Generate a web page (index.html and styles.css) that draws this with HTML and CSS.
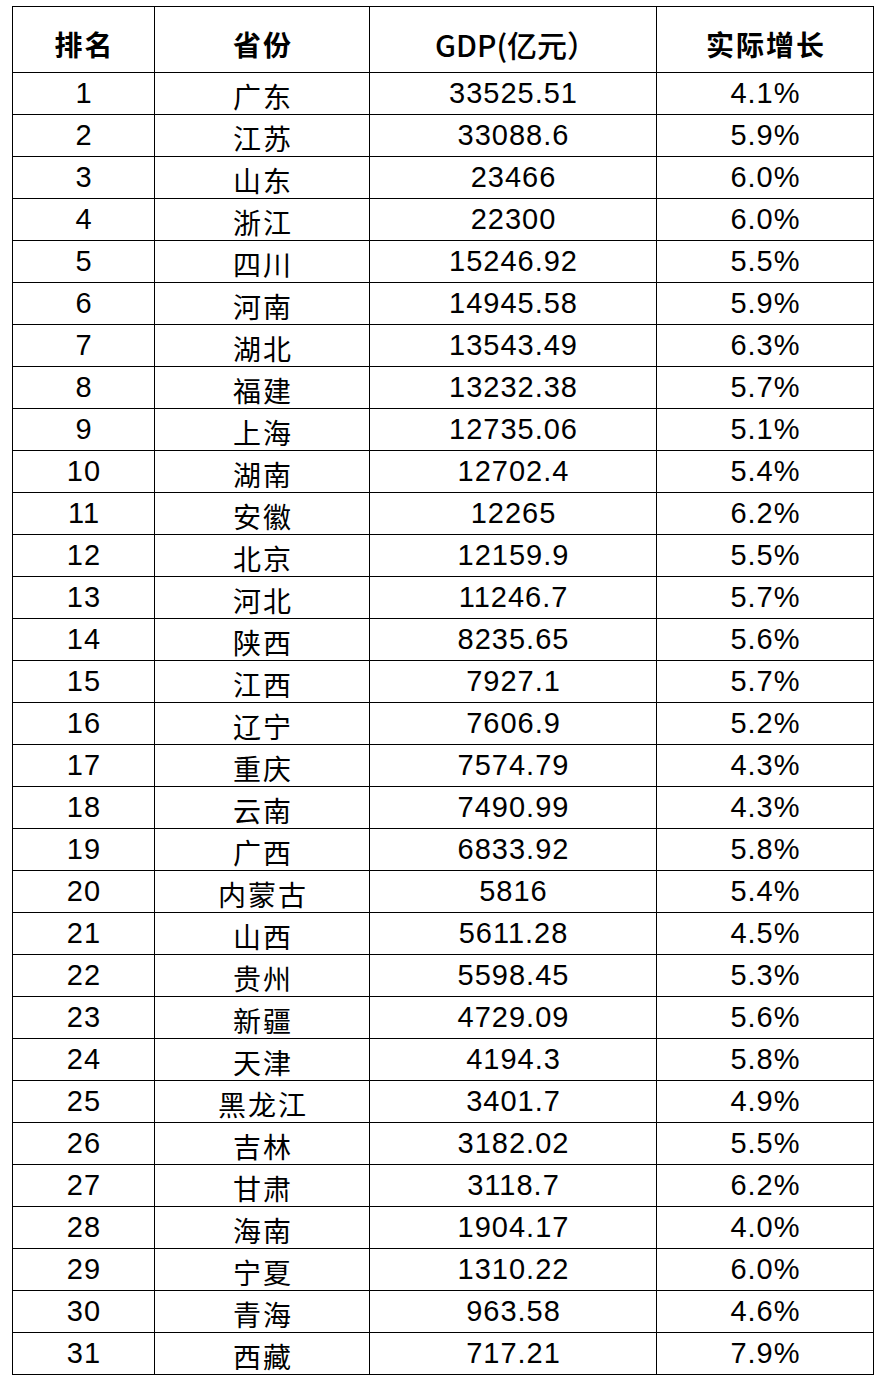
FILE: index.html
```html
<!DOCTYPE html>
<html lang="zh-CN">
<head>
<meta charset="utf-8">
<title>GDP排名</title>
<link rel="stylesheet" href="styles.css">
</head>
<body>
<table class="gdp">
<colgroup><col class="c1"><col class="c2"><col class="c3"><col class="c4"></colgroup>
<thead>
<tr><th>排名</th><th>省份</th><th class="lat">GDP(亿元）</th><th>实际增长</th></tr>
</thead>
<tbody>
<tr><td>1</td><td class="zh">广东</td><td>33525.51</td><td>4.1%</td></tr>
<tr><td>2</td><td class="zh">江苏</td><td>33088.6</td><td>5.9%</td></tr>
<tr><td>3</td><td class="zh">山东</td><td>23466</td><td>6.0%</td></tr>
<tr><td>4</td><td class="zh">浙江</td><td>22300</td><td>6.0%</td></tr>
<tr><td>5</td><td class="zh">四川</td><td>15246.92</td><td>5.5%</td></tr>
<tr><td>6</td><td class="zh">河南</td><td>14945.58</td><td>5.9%</td></tr>
<tr><td>7</td><td class="zh">湖北</td><td>13543.49</td><td>6.3%</td></tr>
<tr><td>8</td><td class="zh">福建</td><td>13232.38</td><td>5.7%</td></tr>
<tr><td>9</td><td class="zh">上海</td><td>12735.06</td><td>5.1%</td></tr>
<tr><td>10</td><td class="zh">湖南</td><td>12702.4</td><td>5.4%</td></tr>
<tr><td>11</td><td class="zh">安徽</td><td>12265</td><td>6.2%</td></tr>
<tr><td>12</td><td class="zh">北京</td><td>12159.9</td><td>5.5%</td></tr>
<tr><td>13</td><td class="zh">河北</td><td>11246.7</td><td>5.7%</td></tr>
<tr><td>14</td><td class="zh">陕西</td><td>8235.65</td><td>5.6%</td></tr>
<tr><td>15</td><td class="zh">江西</td><td>7927.1</td><td>5.7%</td></tr>
<tr><td>16</td><td class="zh">辽宁</td><td>7606.9</td><td>5.2%</td></tr>
<tr><td>17</td><td class="zh">重庆</td><td>7574.79</td><td>4.3%</td></tr>
<tr><td>18</td><td class="zh">云南</td><td>7490.99</td><td>4.3%</td></tr>
<tr><td>19</td><td class="zh">广西</td><td>6833.92</td><td>5.8%</td></tr>
<tr><td>20</td><td class="zh">内蒙古</td><td>5816</td><td>5.4%</td></tr>
<tr><td>21</td><td class="zh">山西</td><td>5611.28</td><td>4.5%</td></tr>
<tr><td>22</td><td class="zh">贵州</td><td>5598.45</td><td>5.3%</td></tr>
<tr><td>23</td><td class="zh">新疆</td><td>4729.09</td><td>5.6%</td></tr>
<tr><td>24</td><td class="zh">天津</td><td>4194.3</td><td>5.8%</td></tr>
<tr><td>25</td><td class="zh">黑龙江</td><td>3401.7</td><td>4.9%</td></tr>
<tr><td>26</td><td class="zh">吉林</td><td>3182.02</td><td>5.5%</td></tr>
<tr><td>27</td><td class="zh">甘肃</td><td>3118.7</td><td>6.2%</td></tr>
<tr><td>28</td><td class="zh">海南</td><td>1904.17</td><td>4.0%</td></tr>
<tr><td>29</td><td class="zh">宁夏</td><td>1310.22</td><td>6.0%</td></tr>
<tr><td>30</td><td class="zh">青海</td><td>963.58</td><td>4.6%</td></tr>
<tr><td>31</td><td class="zh">西藏</td><td>717.21</td><td>7.9%</td></tr>
</tbody>
</table>
</body>
</html>
```
FILE: styles.css
```css
html, body {
  margin: 0;
  padding: 0;
  background: #fff;
}
body {
  padding: 6px 0 0 12px;
  color: #000;
  font-family: "Liberation Sans", "Noto Sans CJK SC", sans-serif;
}
.gdp {
  border-collapse: collapse;
  table-layout: fixed;
  width: 861px;
}
.c1 { width: 142px; }
.c2 { width: 215px; }
.c3 { width: 287px; }
.c4 { width: 217px; }
.gdp th,
.gdp td {
  border: 1px solid #000;
  padding: 0;
  text-align: center;
  vertical-align: middle;
  white-space: nowrap;
  box-sizing: border-box;
}
.gdp th {
  height: 66px;
  font-family: "Noto Sans CJK SC", sans-serif;
  font-weight: 700;
  font-size: 28px;
  letter-spacing: 2px;
  line-height: 1;
  padding-top: 8px;
  padding-left: 2px;
}
.gdp th.lat {
  font-weight: 500;
  font-size: 30px;
  letter-spacing: 0;
  padding-left: 6px;
}
.gdp td {
  height: 42px;
  font-size: 29px;
  line-height: 1;
  letter-spacing: 1px;
  padding-left: 1px;
}
.gdp td.zh {
  font-family: "Noto Sans CJK SC", sans-serif;
  font-size: 28px;
  letter-spacing: 2px;
  padding-left: 2px;
  padding-top: 5px;
}
```
